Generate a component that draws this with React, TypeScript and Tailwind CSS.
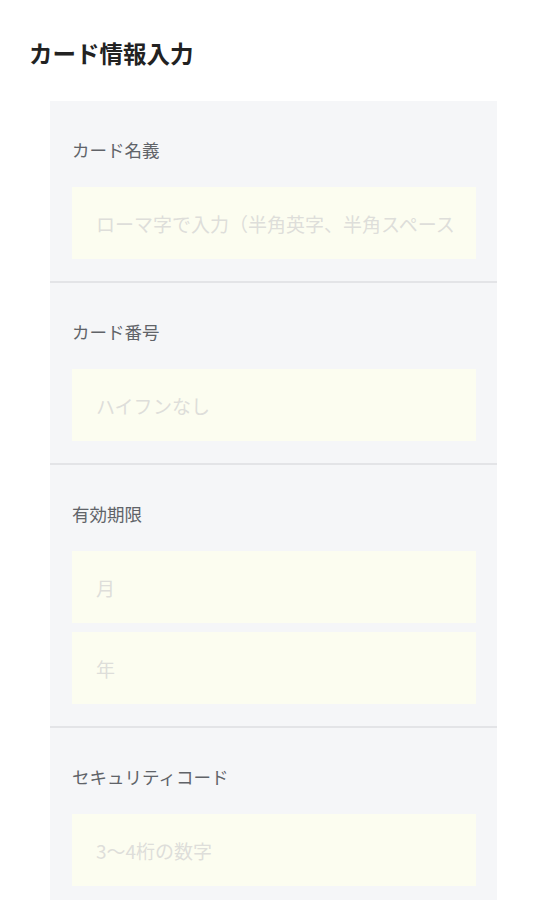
import type { ReactNode } from "react";

const font = {
  fontFamily: '"Noto Sans CJK JP", "Noto Sans", sans-serif',
};

function Field({ placeholder }: { placeholder: string }) {
  return (
    <input
      type="text"
      placeholder={placeholder}
      className="block h-[72px] w-full bg-[#fcfdf0] pl-[24px] pr-[21px] text-[19px] text-[#333] outline-none placeholder:text-[#dededa]"
      style={font}
    />
  );
}

function Section({ label, children, last }: { label: string; children: ReactNode; last?: boolean }) {
  return (
    <div className={last ? "pl-[22px] pr-[21px] pt-[37px] pb-[22px]" : "border-b-2 border-[#e3e4e7] pl-[22px] pr-[21px] pt-[37px] pb-[22px]"}>
      <div className="mb-[25px] h-[24px] text-[17.5px] leading-[24px] text-[#606368]">{label}</div>
      <div className="flex flex-col gap-[9px]">{children}</div>
    </div>
  );
}

export default function App() {
  return (
    <div className="min-h-screen bg-white pt-[37px]" style={font}>
      <h1 className="ml-[29px] h-[32px] text-[23.5px] font-bold leading-[32px] text-[#222]">
        カード情報入力
      </h1>
      <div className="mx-[50px] mt-[32px] bg-[#f5f6f8]">
        <Section label="カード名義">
          <Field placeholder="ローマ字で入力（半角英字、半角スペース）" />
        </Section>
        <Section label="カード番号">
          <Field placeholder="ハイフンなし" />
        </Section>
        <Section label="有効期限">
          <Field placeholder="月" />
          <Field placeholder="年" />
        </Section>
        <Section label="セキュリティコード" last>
          <Field placeholder="3〜4桁の数字" />
        </Section>
      </div>
    </div>
  );
}
